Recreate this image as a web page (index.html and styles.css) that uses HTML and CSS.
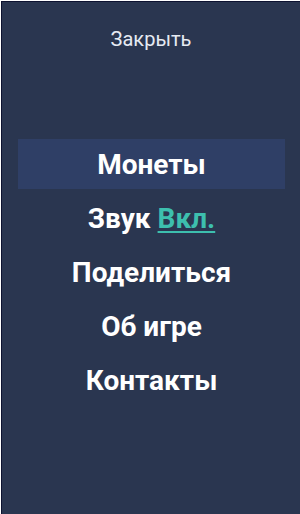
FILE: index.html
```html
<!DOCTYPE html>
<html lang="ru">
<head>
<meta charset="utf-8">
<link rel="stylesheet" href="styles.css">
</head>
<body>
<div class="frame">
  <div class="close">Закрыть</div>
  <ul class="menu">
    <li class="item active">Монеты</li>
    <li class="item">Звук <span class="on">Вкл.</span></li>
    <li class="item">Поделиться</li>
    <li class="item">Об игре</li>
    <li class="item">Контакты</li>
  </ul>
</div>
</body>
</html>
```
FILE: styles.css
```css
html, body {
  margin: 0;
  padding: 0;
  background: #ffffff;
}
body {
  width: 300px;
  height: 514px;
  overflow: hidden;
  font-family: Roboto, "Liberation Sans", sans-serif;
}
.frame {
  box-sizing: border-box;
  margin: 1px 0 0 1px;
  height: 513px;
  background: #2a3650;
  border-top: 1px solid #0d1230;
  border-left: 1px solid #0d1230;
  color: #ffffff;
  display: flex;
  flex-direction: column;
}
.close {
  text-align: center;
  font-size: 20px;
  color: #e6ebf3;
  line-height: 24px;
  padding-top: 25px;
}
.menu {
  list-style: none;
  margin: 0;
  padding: 88px 15px 0 16px;
  display: flex;
  flex-direction: column;
  gap: 4px;
}
.item {
  height: 50px;
  display: flex;
  align-items: center;
  justify-content: center;
  font-size: 28px;
  font-weight: 700;
  color: #ffffff;
}
.item.active {
  background: #2f3f66;
}
.on {
  color: #3dbfae;
  text-decoration: underline;
  text-decoration-thickness: 2px;
  text-underline-offset: 3px;
  margin-left: 7px;
}
```
